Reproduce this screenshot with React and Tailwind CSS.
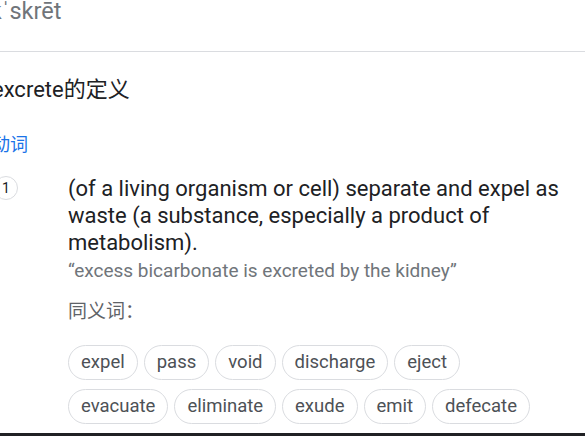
const synonyms = [
  ['expel', 'pass', 'void', 'discharge', 'eject'],
  ['evacuate', 'eliminate', 'exude', 'emit', 'defecate'],
  ['secrete', 'excrete', 'urinate'],
];

function Chip({ word }) {
  return (
    <span className="h-[35px] px-[12px] flex items-center rounded-full border border-[#dadce0] text-[18.5px] text-[#4d5156] whitespace-nowrap">
      {word}
    </span>
  );
}

export default function App() {
  return (
    <div className="w-[585px] h-[436px] flex flex-col bg-white overflow-hidden font-[Roboto,'Noto_Sans_CJK_SC',sans-serif]">
      <div className="flex-1 overflow-hidden">
        {/* 发音 */}
        <div className="h-[52px] border-b border-[#dadce0]">
          <div className="-ml-[16px] text-[23.5px] leading-[22px] text-[#70757a] whitespace-nowrap">ikˈskrēt</div>
        </div>

        <div className="-ml-[8px] mt-[24px] text-[22px] leading-[28px] text-[#202124] whitespace-nowrap">
          excrete的定义
        </div>

        <div className="-ml-[8px] mt-[29px] text-[18px] leading-[24px] text-[#1a73e8]">动词</div>

        <div className="mt-[18px] flex">
          <div className="-ml-[6px] mt-[1px] w-[24px] h-[24px] shrink-0 rounded-full border border-[#dadce0] flex items-center justify-center text-[14px] text-[#202124]">
            1
          </div>
          <div className="ml-[50px] pr-[8px]">
            <p className="text-[22px] leading-[27px] text-[#202124]">
              (of a living organism or cell) separate and expel as waste (a substance, especially a product of metabolism).
            </p>
            <p className="mt-[3px] text-[19px] leading-[24px] text-[#70757a]">
              “excess bicarbonate is excreted by the kidney”
            </p>
            <p className="mt-[17px] text-[19px] leading-[24px] text-[#5f6368]">同义词：</p>
            <div className="mt-[21px] flex flex-col gap-[9px]">
              {synonyms.map((row, i) => (
                <div key={i} className="flex gap-[6px]">
                  {row.map((w) => (
                    <Chip key={w} word={w} />
                  ))}
                </div>
              ))}
            </div>
          </div>
        </div>
      </div>
      <div className="h-[3px] bg-[#202124]" />
    </div>
  );
}
